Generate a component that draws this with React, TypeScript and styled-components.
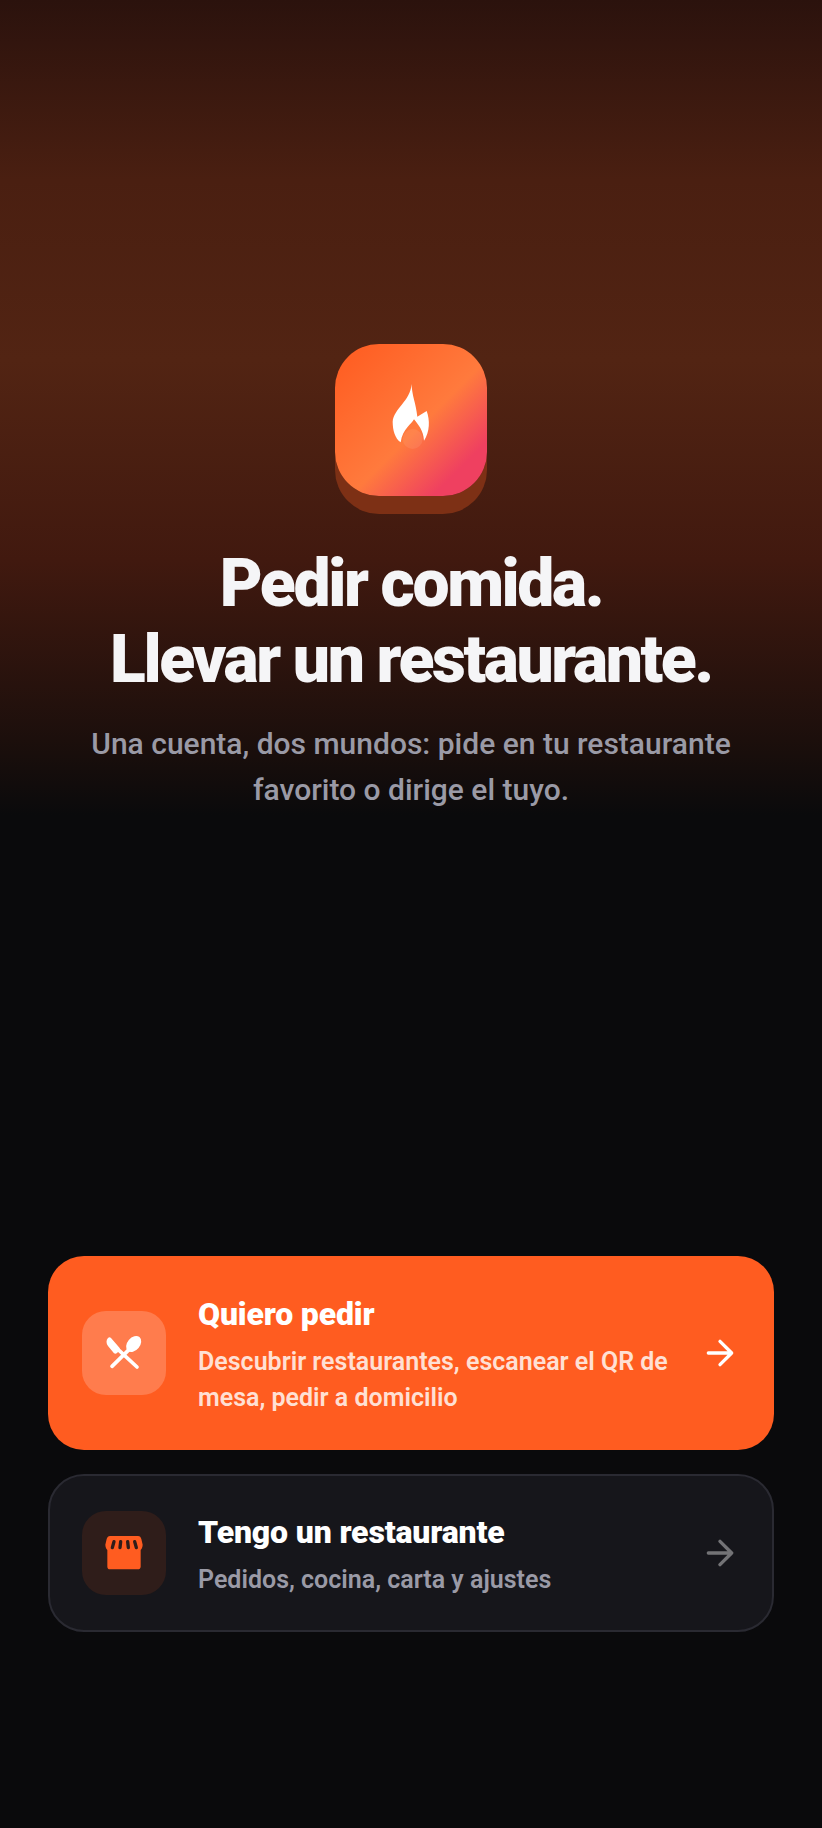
import React from "react";
import styled, { createGlobalStyle } from "styled-components";

const GlobalStyle = createGlobalStyle`
  html, body {
    margin: 0;
    padding: 0;
    background: #0a0a0c;
  }
  * {
    box-sizing: border-box;
  }
`;

const Page = styled.div`
  width: 822px;
  height: 1828px;
  display: flex;
  flex-direction: column;
  font-family: Roboto, "Liberation Sans", sans-serif;
  background: linear-gradient(180deg, #2b120d 0, #4a1f11 180px, #522413 360px, #41190f 560px, #1c0f0c 740px, #0a0a0c 815px);
  background-repeat: no-repeat;
  background-size: 100% 815px;
  background-color: #0a0a0c;
`;

const Hero = styled.div`
  display: flex;
  flex-direction: column;
  align-items: center;
  padding-top: 344px;
  height: 1256px;
`;

const Logo = styled.div`
  width: 152px;
  height: 152px;
  border-radius: 44px;
  display: flex;
  align-items: center;
  justify-content: center;
  background: linear-gradient(135deg, #ff5a1f 0%, #ff7a3d 55%, #ef4060 82%);
  box-shadow: 0 18px 0 #7d3015;
  margin-bottom: 50px;
`;

const Title = styled.h1`
  margin: 0 0 23px;
  font-size: 66px;
  line-height: 76px;
  font-weight: 900;
  letter-spacing: -2.4px;
  color: #f5f5f7;
  text-align: center;
`;

const Lead = styled.p`
  margin: 0;
  width: 680px;
  font-size: 30px;
  line-height: 46px;
  font-weight: 500;
  color: #9a9aa6;
  text-align: center;
`;

const Choices = styled.div`
  display: flex;
  flex-direction: column;
  gap: 24px;
  padding: 0 48px;
`;

const Choice = styled.div<{ $primary?: boolean }>`
  display: flex;
  align-items: center;
  gap: 32px;
  padding: ${(p) => (p.$primary ? "36px 34px" : "34px 32px")};
  border-radius: 36px;
  background: ${(p) => (p.$primary ? "#ff5c20" : "#16161b")};
  border: ${(p) => (p.$primary ? "none" : "2px solid #2a2a32")};
`;

const IconBox = styled.div<{ $primary?: boolean }>`
  flex: none;
  width: 84px;
  height: 84px;
  border-radius: 24px;
  display: flex;
  align-items: center;
  justify-content: center;
  background: ${(p) => (p.$primary ? "#ff7c4d" : "#2f1d1a")};
`;

const Body = styled.div`
  flex: 1;
  min-width: 0;
`;

const Name = styled.div`
  font-size: 32px;
  line-height: 44px;
  font-weight: 900;
  letter-spacing: -0.15px;
  color: #ffffff;
  margin-bottom: 8px;
`;

const Note = styled.div<{ $primary?: boolean }>`
  font-size: 25px;
  line-height: 36px;
  font-weight: 600;
  margin-bottom: -2px;
  color: ${(p) => (p.$primary ? "#ffe0d4" : "#9a9aa6")};
`;

const Arrow = styled.svg<{ $primary?: boolean }>`
  flex: none;
  width: 40px;
  height: 40px;
  fill: none;
  stroke: #fff;
  stroke-width: 2;
  stroke-linecap: round;
  stroke-linejoin: round;
  opacity: ${(p) => (p.$primary ? 1 : 0.4)};
`;

const ArrowIcon = ({ primary }: { primary?: boolean }) => (
  <Arrow $primary={primary} viewBox="0 0 24 24">
    <path d="M5 12h14M12 5l7 7-7 7" />
  </Arrow>
);

export default function App() {
  return (
    <>
      <GlobalStyle />
      <Page>
        <Hero>
          <Logo>
            <svg width="60" height="80" viewBox="3 15 180 240">
              <circle cx="98" cy="192" r="30" fill="#fff" fillOpacity="0.08" />
              <path
                fill="#fff"
                d="M95 27c0 33 13 58 17 98l28-17c10 27 10 62-8 89-2-32-17-47-30-64-7 15-34 27-40 69-17-12-24-37-24-62 4-40 52-60 57-113z"
              />
            </svg>
          </Logo>
          <Title>
            Pedir comida.
            <br />
            Llevar un restaurante.
          </Title>
          <Lead>Una cuenta, dos mundos: pide en tu restaurante favorito o dirige el tuyo.</Lead>
        </Hero>
        <Choices>
          <Choice $primary>
            <IconBox $primary>
              <svg width="50" height="50" viewBox="-3 -6 150 150" fill="#fff" stroke="#fff" strokeLinecap="round">
                <path stroke="none" d="M24 24c3-3 6-3 9 0l26 30c2 3 1 6-2 9l-6 6c-3 3-6 3-9 1L24 48c-6-7-6-18 0-24z" />
                <path strokeWidth="11" d="M58 62l53 49" />
                <path strokeWidth="11" fill="none" d="M90 56L36 109" />
                <ellipse stroke="none" cx="101" cy="42" rx="19" ry="27" transform="rotate(40 101 42)" />
              </svg>
            </IconBox>
            <Body>
              <Name>Quiero pedir</Name>
              <Note $primary>Descubrir restaurantes, escanear el QR de mesa, pedir a domicilio</Note>
            </Body>
            <ArrowIcon primary />
          </Choice>
          <Choice>
            <IconBox>
              <svg width="50" height="50" viewBox="-3 -6 150 150">
                <path
                  fill="#ff5c20"
                  d="M30 18h84c6 0 8 4 10 9l4 17c0 8-4 14-6 16v50c0 5-4 8-9 8H30c-5 0-8-3-8-8V60c-2-2-6-8-6-16l4-17c2-5 5-9 10-9z"
                />
                <path stroke="#2f1d1a" strokeWidth="10" strokeLinecap="round" d="M42 35l-5 18M62 35l-2 18M83 35l2 18M104 35l5 18" />
              </svg>
            </IconBox>
            <Body>
              <Name>Tengo un restaurante</Name>
              <Note>Pedidos, cocina, carta y ajustes</Note>
            </Body>
            <ArrowIcon />
          </Choice>
        </Choices>
      </Page>
    </>
  );
}
